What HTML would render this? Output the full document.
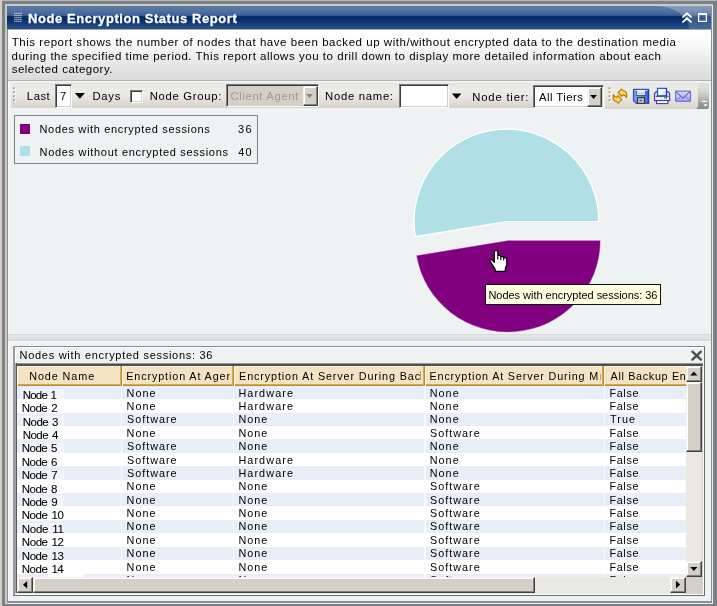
<!DOCTYPE html>
<html><head><meta charset="utf-8"><title>Node Encryption Status Report</title>
<style>
html,body{margin:0;padding:0}
body{width:717px;height:606px;position:relative;overflow:hidden;background:#7d8087;font-family:'Liberation Sans',sans-serif;}
div,span,svg{position:absolute;box-sizing:border-box}
.t{white-space:pre;color:#000}
.sunk{border:1px solid;border-color:#7b7b7b #fdfdfd #fdfdfd #7b7b7b;box-shadow:inset 1px 1px 0 #3c3c3c, inset -1px -1px 0 #d4d0c8;background:#fff}
.btn{background:#d4d0c8;border:1px solid;border-color:#f4f2ee #404040 #404040 #f4f2ee;box-shadow:inset -1px -1px 0 #808080, inset 1px 1px 0 #fff}
.hd{top:0;height:19.8px;background:linear-gradient(to right,#fdf6e6 0,#fdf6e6 1.2px,transparent 1.2px,transparent calc(100% - 1.7px),#d8b05c calc(100% - 1.8px),#ad7e24 100%),linear-gradient(to bottom,#fbf1dc 0,#fbf1dc 1px,#f3e3c3 1px,#f3e3c3 calc(100% - 1.9px),#dcb25a calc(100% - 2px),#ad7e24 100%)}
.vl{top:19.8px;width:1.2px;height:200px;background:rgba(255,255,255,.75)}
</style></head><body>
<!-- outer frame -->
<div style="left:0;top:0;width:2px;height:606px;background:#d4d0c8"></div>
<div style="left:2px;top:0;width:715px;height:1.2px;background:#b4b6ba"></div>
<div style="left:5.2px;top:4px;width:708px;height:600.2px;background:#f0efec"></div>
<div style="left:5.2px;top:4px;width:708px;height:2px;background:#cbcac6"></div>
<div style="left:5.2px;top:4px;width:1.5px;height:600.2px;background:#cbc8c2"></div>
<div style="left:6.7px;top:6px;width:705.3px;height:597px;background:#8a8e95"></div>
<!-- title bar -->
<div style="left:7.2px;top:6px;width:704.1px;height:23.1px;background:linear-gradient(#5c7ca6 0%,#52729f 20%,#43639a 36%,#3b5b92 41%,#0a2f6a 45%,#032a66 51%,#0c3470 67%,#1c437d 83%,#2b5189 100%)"></div>
<svg style="left:0;top:0" width="717" height="40"><defs><linearGradient id="hl" x1="0" y1="0" x2="0" y2="1"><stop offset="0" stop-color="#fff" stop-opacity=".27"/><stop offset=".41" stop-color="#fff" stop-opacity=".18"/><stop offset=".45" stop-color="#fff" stop-opacity=".24"/><stop offset="1" stop-color="#fff" stop-opacity=".13"/></linearGradient></defs>
<path d="M655.5,6 A33.6,23.2 0 0 1 689.1,29.2 L711.3,29.2 L711.3,6 Z" fill="url(#hl)"/>
<g fill="#c8d4e4"><rect x="14.2" y="12.8" width="1.35" height="1.15"/><rect x="16.2" y="12.8" width="1.35" height="1.15"/><rect x="18.2" y="12.8" width="1.35" height="1.15"/><rect x="20.2" y="12.8" width="1.35" height="1.15"/><rect x="14.2" y="14.8" width="1.35" height="1.15"/><rect x="16.2" y="14.8" width="1.35" height="1.15"/><rect x="18.2" y="14.8" width="1.35" height="1.15"/><rect x="20.2" y="14.8" width="1.35" height="1.15"/><rect x="14.2" y="16.8" width="1.35" height="1.15"/><rect x="16.2" y="16.8" width="1.35" height="1.15"/><rect x="18.2" y="16.8" width="1.35" height="1.15"/><rect x="20.2" y="16.8" width="1.35" height="1.15"/><rect x="14.2" y="18.8" width="1.35" height="1.15"/><rect x="16.2" y="18.8" width="1.35" height="1.15"/><rect x="18.2" y="18.8" width="1.35" height="1.15"/><rect x="20.2" y="18.8" width="1.35" height="1.15"/><rect x="14.2" y="20.8" width="1.35" height="1.15"/><rect x="16.2" y="20.8" width="1.35" height="1.15"/><rect x="18.2" y="20.8" width="1.35" height="1.15"/><rect x="20.2" y="20.8" width="1.35" height="1.15"/></g>
<g fill="none" stroke="#fff" stroke-width="1.9" stroke-linecap="round" stroke-linejoin="miter"><path d="M683,16.9 L687,13.3 L691,16.9"/><path d="M683,21.9 L687,18.3 L691,21.9"/></g>
<path d="M698,13 H707 V22 H698 Z M699.2,15 V20.8 H705.8 V15 Z" fill="#fff" fill-rule="evenodd"/>
</svg>
<!-- panel body -->
<div style="left:8px;top:29.1px;width:702.5px;height:572.4px;background:#eef2f3"></div>
<div style="left:8px;top:29.1px;width:702.5px;height:1.2px;background:#a4a8b0"></div>
<div style="left:8px;top:30.3px;width:702.5px;height:49.3px;background:linear-gradient(#ffffff 0%,#fbfbfb 25%,#ebebeb 60%,#dadada 100%)"></div>
<div style="left:8px;top:79.5px;width:702.5px;height:1.1px;background:#b4b4b4"></div>
<div style="left:8px;top:80.6px;width:1.2px;height:520.9px;background:#f7f9fa"></div>
<!-- toolbar 1 -->
<div style="left:10.8px;top:83.4px;width:593.2px;height:25px;border-radius:2.5px;background:linear-gradient(#e8e5e0 0%,#edebe7 22%,#ebe8e4 50%,#e2dfd9 72%,#d5d1c9 100%)"></div>
<!-- toolbar 2 -->
<div style="left:605px;top:83.4px;width:104px;height:25.2px;border-radius:2.5px;overflow:hidden;background:linear-gradient(#e3e1dc 0%,#dad8d3 30%,#bcbbb8 58%,#9c9c9b 80%,#878787 100%)"><div style="left:0;top:0;width:93.2px;height:25.2px;border-bottom-right-radius:3.5px;background:linear-gradient(#e9e7e2 0%,#edebe7 22%,#ebe9e5 50%,#e3e0da 72%,#d8d4cc 100%)"></div></div>
<svg style="left:0;top:80px" width="717" height="32">
<g fill="#fff"><rect x="13.9" y="8.1" width="1.9" height="1.9"/><rect x="13.9" y="12.1" width="1.9" height="1.9"/><rect x="13.9" y="16.2" width="1.9" height="1.9"/><rect x="13.9" y="20.2" width="1.9" height="1.9"/><rect x="609.5" y="8.1" width="1.9" height="1.9"/><rect x="609.5" y="12.1" width="1.9" height="1.9"/><rect x="609.5" y="16.1" width="1.9" height="1.9"/><rect x="609.5" y="20.1" width="1.9" height="1.9"/></g>
<g fill="#a29e96"><rect x="13" y="7.3" width="1.8" height="1.8"/><rect x="13" y="11.3" width="1.8" height="1.8"/><rect x="13" y="15.4" width="1.8" height="1.8"/><rect x="13" y="19.4" width="1.8" height="1.8"/><rect x="608.6" y="7.3" width="1.8" height="1.8"/><rect x="608.6" y="11.3" width="1.8" height="1.8"/><rect x="608.6" y="15.3" width="1.8" height="1.8"/><rect x="608.6" y="19.3" width="1.8" height="1.8"/></g>
</svg>
<div class="sunk" style="left:55px;top:83.9px;width:17px;height:24px"></div>
<svg style="left:70px;top:88px" width="20" height="16" viewBox="70 88 20 16"><path d="M74.8,93.1 H84.9 L79.85,98.7 Z" fill="#000"/></svg>
<div class="sunk" style="left:129.8px;top:89.5px;width:13.4px;height:13.7px"></div>
<div class="sunk" style="left:226.4px;top:84.2px;width:93.1px;height:23.3px;background:#d4d0c8"></div>
<div class="btn" style="left:302.8px;top:86.4px;width:15.1px;height:19.5px"></div>
<svg style="left:300px;top:88px" width="20" height="16" viewBox="300 88 20 16"><path d="M306.2,93.9 H312.9 L309.55,97.9 Z" fill="#85837d"/></svg>
<div class="sunk" style="left:398.9px;top:83.9px;width:49.7px;height:23.8px"></div>
<svg style="left:448px;top:88px" width="20" height="16" viewBox="448 88 20 16"><path d="M451.9,93.6 H461.4 L456.65,99 Z" fill="#000"/></svg>
<div class="sunk" style="left:533.2px;top:85px;width:70.4px;height:23.4px"></div>
<div class="btn" style="left:586.8px;top:87px;width:15.1px;height:19.8px"></div>
<svg style="left:584px;top:88px" width="20" height="16" viewBox="584 88 20 16"><path d="M590.2,95 H596.9 L593.55,99 Z" fill="#000"/></svg>
<!-- toolbar 2 icons -->
<svg style="left:600px;top:80px" width="117" height="32" viewBox="600 80 117 32">
<!-- refresh -->
<defs><linearGradient id="gy" x1="0" y1="0" x2="0" y2="1"><stop offset="0" stop-color="#fff0a0"/><stop offset=".45" stop-color="#fcd850"/><stop offset="1" stop-color="#eeb028"/></linearGradient>
<linearGradient id="gb" x1="0" y1="0" x2="1" y2="0"><stop offset="0" stop-color="#7fa4ea"/><stop offset=".5" stop-color="#5c88de"/><stop offset="1" stop-color="#3a66cc"/></linearGradient>
<linearGradient id="gp" x1="0" y1="0" x2="1" y2="1"><stop offset="0" stop-color="#ffffff"/><stop offset=".5" stop-color="#f4f8ff"/><stop offset="1" stop-color="#b8d8f8"/></linearGradient>
<linearGradient id="gl" x1="0" y1="0" x2="0" y2="1"><stop offset="0" stop-color="#f4f4f4"/><stop offset="1" stop-color="#c4c4c4"/></linearGradient>
<linearGradient id="gm" x1="0" y1="0" x2="0" y2="1"><stop offset="0" stop-color="#d8d8ff"/><stop offset="1" stop-color="#a8a8f8"/></linearGradient>
</defs>
<g stroke="#b27e10" stroke-width="1.15" fill="url(#gy)" stroke-linejoin="round">
<path d="M618.1,92.5 L621.9,89 L623.1,90.7 L625,91.1 L626.7,93.3 L626.6,97.5 L624.6,95.4 L623.1,95 L621.9,96.5 Z"/>
<path transform="rotate(180 619.95 96.1)" d="M618.1,92.5 L621.9,89 L623.1,90.7 L625,91.1 L626.7,93.3 L626.6,97.5 L624.6,95.4 L623.1,95 L621.9,96.5 Z"/>
</g>
<!-- save -->
<path d="M633.5,89.3 H648.6 V103.4 H636.4 L633.5,100.8 Z" fill="url(#gb)" stroke="#2854c2" stroke-width="1.2" stroke-linejoin="round"/>
<path d="M648.5,89.6 V103.4" stroke="#1c44ae" stroke-width="1.3"/>
<path d="M634.4,90.5 H647.6" stroke="#a9c2f2" stroke-width="1"/>
<path d="M636.7,91.2 V95.4 H645.5 V91.2" fill="none" stroke="#2c58c4" stroke-width="1.1"/>
<rect x="637.3" y="90.3" width="7.5" height="4.4" fill="url(#gl)" stroke="#fafafa" stroke-width=".6"/>
<rect x="637.5" y="97.6" width="7" height="5.8" fill="#b2b4b6" stroke="#363638" stroke-width="1"/>
<rect x="639.9" y="99.9" width="2" height="1.2" fill="#3466d4"/>
<!-- print -->
<path d="M656.2,91.6 L654.5,93.6 V100.6 H669.7 V93.6 L668,91.6 Z" fill="#ececf8" stroke="#3e3e8e" stroke-width="1.15" stroke-linejoin="round"/>
<rect x="657.5" y="88.4" width="9" height="7.4" fill="url(#gp)" stroke="#1e5cd0" stroke-width="1.25"/>
<path d="M666.5,88.4 V95.8" stroke="#2c3c9e" stroke-width="1.2"/>
<path d="M655.6,96.3 H668.6" stroke="#3e3e8e" stroke-width="1"/>
<rect x="656.5" y="100.5" width="11.3" height="3.1" fill="#f2f2fc" stroke="#3e3e8e" stroke-width="1.05"/>
<rect x="660" y="101.2" width="4" height="1" fill="#d4e8fc"/>
<rect x="664" y="97" width="1.6" height="1.7" fill="#44c424"/><rect x="665.6" y="97" width="1.5" height="1.7" fill="#2462d2"/>
<!-- mail -->
<rect x="675.6" y="91.1" width="15" height="10.2" rx=".6" fill="url(#gm)" stroke="#5a5acc" stroke-width=".95"/>
<path d="M675.8,101 L680.6,96.4 M690.4,101 L685.6,96.4" fill="none" stroke="#4a74e0" stroke-width="0.8"/>
<path d="M675.8,91.3 L683,98.3 L690.2,91.3" fill="none" stroke="#34347a" stroke-width="0.95"/>
<!-- overflow -->
<path d="M701.8,100.8 H707.1 V102 H701.8 Z" fill="#fff"/>
<path d="M703.6,104.6 L707.6,103.8 L705.4,106.8 Z" fill="#fff"/>
</svg>
<!-- legend -->
<div style="left:13.6px;top:115px;width:244.2px;height:48.8px;border:1px solid #7f8387"></div>
<div style="left:19.8px;top:123.8px;width:10.2px;height:9.9px;background:#800080"></div>
<div style="left:19.8px;top:146.4px;width:10.2px;height:9.9px;background:#b0e0e6"></div>
<!-- pie -->
<svg style="left:0;top:110px" width="717" height="230" viewBox="0 110 717 230"><path d="M506.50,221.50 L415.36,236.71 A92.4,92.4 0 1 1 598.90,221.50 Z" fill="#b0e0e6" stroke="#ffffff" stroke-width="1.2"/><path d="M507.8,240.8 L600.10,240.8 A92.3,91.1 0 0 1 416.76,255.79 Z" fill="#800080" stroke="#943094" stroke-width="0.5"/></svg>
<!-- tooltip -->
<div style="left:485px;top:284.2px;width:175.9px;height:20.8px;background:#ffffe1;border:1.15px solid #101010"></div>
<!-- cursor -->
<svg style="left:486px;top:246px" width="26" height="30" viewBox="486 246 26 30">
<path d="M494.3,251.6 Q494.3,250.6 495.3,250.6 L496.8,250.6 Q497.8,250.6 497.8,251.6 L497.8,255.4 L499.8,255.4 Q500.7,255.4 500.7,256.5 L502.8,256.5 Q503.6,256.5 503.6,257.6 L505.8,257.8 Q506.8,258 506.8,259.2 L506.8,265.4 L505.6,267.6 L505.1,271.3 L495.3,271.3 L495.1,269 L492.6,265.2 L490.1,261.4 L490.1,259.8 Q490.6,259 491.7,259.6 L494.3,262.4 Z" fill="#fff" stroke="#000" stroke-width="1.25" stroke-linejoin="round"/>
<path d="M497.8,255.4 V259.6 M500.8,256.6 V259.9 M503.7,257.7 V260.6" stroke="#000" stroke-width="1.1" fill="none"/>
</svg>
<!-- splitter -->
<div style="left:8px;top:333.8px;width:702.5px;height:6.8px;background:linear-gradient(#d4d7da 0%,#e4e6e8 25%,#dddfe1 70%,#d0d2d5 100%)"></div>
<div style="left:8px;top:340.6px;width:702.5px;height:1px;background:#f6f8fa"></div>
<!-- lower panel -->
<div style="left:13.4px;top:346px;width:691.7px;height:249.9px;background:#6e6c70"></div><div style="left:13.4px;top:346px;width:690.6px;height:1.2px;background:#868a8e"></div><div style="left:13.4px;top:346px;width:1.2px;height:248.8px;background:#989ca0"></div><div style="left:14.6px;top:347.2px;width:689.4px;height:247.6px;background:#eef2f3;box-shadow:inset 1px 1px 0 #fafcfd"></div>
<svg style="left:688px;top:348px" width="16" height="16" viewBox="688 348 16 16"><path d="M692.4,351.6 L700.9,359.6 M700.9,351.6 L692.4,359.6" stroke="#4c4c4c" stroke-width="2.3" stroke-linecap="round" fill="none"/><rect x="695.2" y="354.2" width="2.9" height="2.9" fill="#4c4c4c"/></svg>
<!-- table -->
<div style="left:14.6px;top:363px;width:689.6px;height:231.9px;background:#fff"></div>
<div style="left:14.6px;top:363px;width:688.3px;height:230.7px;background:#d4d0c8"></div>
<div style="left:14.6px;top:363px;width:688.3px;height:2.8px;background:linear-gradient(#969696 0,#969696 42%,#505050 43%,#505050 100%)"></div>
<div style="left:14.6px;top:363px;width:2.3px;height:230.4px;background:linear-gradient(90deg,#a0a0a0 0,#a0a0a0 45%,#585858 46%,#585858 100%)"></div>
<div style="left:16.9px;top:365.8px;width:684.9px;height:227.8px;background:#fff;overflow:hidden">
  <div style="left:0;top:0;width:669px;height:211.2px;overflow:hidden;background:#fff">
    <div style="position:absolute;left:0;top:20.05px;width:100%;height:13.60px;background:#e8eef8"></div><div style="position:absolute;left:0;top:33.45px;width:100%;height:13.60px;background:#ffffff"></div><div style="position:absolute;left:0;top:46.86px;width:100%;height:13.60px;background:#e8eef8"></div><div style="position:absolute;left:0;top:60.26px;width:100%;height:13.60px;background:#ffffff"></div><div style="position:absolute;left:0;top:73.67px;width:100%;height:13.60px;background:#e8eef8"></div><div style="position:absolute;left:0;top:87.07px;width:100%;height:13.60px;background:#ffffff"></div><div style="position:absolute;left:0;top:100.48px;width:100%;height:13.60px;background:#e8eef8"></div><div style="position:absolute;left:0;top:113.88px;width:100%;height:13.60px;background:#ffffff"></div><div style="position:absolute;left:0;top:127.29px;width:100%;height:13.60px;background:#e8eef8"></div><div style="position:absolute;left:0;top:140.69px;width:100%;height:13.60px;background:#ffffff"></div><div style="position:absolute;left:0;top:154.10px;width:100%;height:13.60px;background:#e8eef8"></div><div style="position:absolute;left:0;top:167.51px;width:100%;height:13.60px;background:#ffffff"></div><div style="position:absolute;left:0;top:180.91px;width:100%;height:13.60px;background:#e8eef8"></div><div style="position:absolute;left:0;top:194.31px;width:100%;height:13.60px;background:#ffffff"></div><div style="position:absolute;left:0;top:207.72px;width:100%;height:13.60px;background:#e8eef8"></div>
    <div style="left:3.8px;top:23.3px;width:43.5px;height:11px;background:rgba(255,255,255,.38)"></div><div style="left:3.8px;top:36.8px;width:43.5px;height:11px;background:rgba(255,255,255,.38)"></div><div style="left:3.8px;top:50.2px;width:43.5px;height:11px;background:rgba(255,255,255,.38)"></div><div style="left:3.8px;top:63.6px;width:43.5px;height:11px;background:rgba(255,255,255,.38)"></div><div style="left:3.8px;top:77.0px;width:43.5px;height:11px;background:rgba(255,255,255,.38)"></div><div style="left:3.8px;top:90.4px;width:43.5px;height:11px;background:rgba(255,255,255,.38)"></div><div style="left:3.8px;top:103.8px;width:43.5px;height:11px;background:rgba(255,255,255,.38)"></div><div style="left:3.8px;top:117.2px;width:43.5px;height:11px;background:rgba(255,255,255,.38)"></div><div style="left:3.8px;top:130.6px;width:43.5px;height:11px;background:rgba(255,255,255,.38)"></div><div style="left:3.8px;top:144.0px;width:43.5px;height:11px;background:rgba(255,255,255,.38)"></div><div style="left:3.8px;top:157.4px;width:43.5px;height:11px;background:rgba(255,255,255,.38)"></div><div style="left:3.8px;top:170.9px;width:43.5px;height:11px;background:rgba(255,255,255,.38)"></div><div style="left:3.8px;top:184.3px;width:43.5px;height:11px;background:rgba(255,255,255,.38)"></div><div style="left:3.8px;top:197.7px;width:43.5px;height:11px;background:rgba(255,255,255,.38)"></div>
    <div class="vl" style="left:104.3px"></div><div class="vl" style="left:216.4px"></div><div class="vl" style="left:407.5px"></div><div class="vl" style="left:586.7px"></div>
    <div class="hd" style="left:0;width:104.7px"></div>
    <div class="hd" style="left:104.7px;width:112.1px"></div>
    <div class="hd" style="left:216.8px;width:191.1px"></div>
    <div class="hd" style="left:407.9px;width:179.2px"></div>
    <div class="hd" style="left:587.1px;width:90px"></div>
    <div style="left:403.4px;top:5.6px;width:1.1px;height:8.8px;background:rgba(60,50,30,.38)"></div>
    <div style="left:582.7px;top:8.2px;width:1.1px;height:6.2px;background:rgba(60,50,30,.38)"></div>
  </div>
  <!-- vertical scrollbar -->
  <div style="left:669px;top:0;width:16px;height:211.2px;background:#eae8e3"></div>
  <div class="btn" style="left:669px;top:0.6px;width:15.9px;height:15.2px"></div>
  <svg style="left:669px;top:0.6px" width="16" height="16"><path d="M4.2,9.6 H11.4 L7.8,5.6 Z" fill="#000"/></svg>
  <div class="btn" style="left:669px;top:15.8px;width:15.9px;height:70px"></div>
  <div class="btn" style="left:669px;top:195.2px;width:15.9px;height:15.6px"></div>
  <svg style="left:669px;top:195.2px" width="16" height="16"><path d="M4.2,6 H11.4 L7.8,10 Z" fill="#000"/></svg>
  <!-- horizontal scrollbar -->
  <div style="left:0;top:211.2px;width:685px;height:16.6px;background:#eae8e3"></div>
  <div class="btn" style="left:0;top:211.4px;width:16.1px;height:15.4px"></div>
  <svg style="left:0;top:211.4px" width="16" height="16"><path d="M10.2,4 V11.6 L6,7.8 Z" fill="#000"/></svg>
  <div class="btn" style="left:16.1px;top:211.4px;width:501.7px;height:15.4px"></div>
  <div class="btn" style="left:653.4px;top:211.4px;width:15.6px;height:15.4px"></div>
  <svg style="left:653.4px;top:211.4px" width="16" height="16"><path d="M6,3.8 V11.4 L10.2,7.6 Z" fill="#000"/></svg>
  <div style="left:669px;top:211.2px;width:16px;height:16.6px;background:#d4d0c8"></div>
</div>
<!-- row text (clipped to table viewport) -->
<div style="left:0;top:0;width:685.9px;height:577px;overflow:hidden;background:transparent;will-change:transform">
<span class="t" style="left:29.21px;top:369.00px;font-size:10.8px;line-height:14px;letter-spacing:0.917px;">Node Name</span>
<span class="t" style="left:126.21px;top:369.00px;font-size:10.8px;line-height:14px;letter-spacing:0.884px;">Encryption At Ager</span>
<span class="t" style="left:239.11px;top:369.00px;font-size:10.8px;line-height:14px;letter-spacing:0.871px;">Encryption At Server During Bac</span>
<span class="t" style="left:429.51px;top:369.00px;font-size:10.8px;line-height:14px;letter-spacing:0.838px;">Encryption At Server During M</span>
<span class="t" style="left:610.58px;top:369.00px;font-size:10.8px;line-height:14px;letter-spacing:0.666px;">All Backup En</span>
<span class="t" style="-webkit-text-stroke:.08px #000;left:22.76px;top:388.00px;font-size:11.5px;line-height:15px;letter-spacing:-0.819px;word-spacing:1.2px;">Node 1</span>
<span class="t" style="left:126.61px;top:386.00px;font-size:10.8px;line-height:14px;letter-spacing:1.050px;">None</span>
<span class="t" style="left:238.41px;top:386.00px;font-size:10.8px;line-height:14px;letter-spacing:1.107px;">Hardware</span>
<span class="t" style="left:429.71px;top:386.00px;font-size:10.8px;line-height:14px;letter-spacing:1.050px;">None</span>
<span class="t" style="left:609.41px;top:386.00px;font-size:10.8px;line-height:14px;letter-spacing:0.664px;">False</span>
<span class="t" style="-webkit-text-stroke:.08px #000;left:21.76px;top:401.00px;font-size:11.5px;line-height:15px;letter-spacing:-0.495px;word-spacing:1.2px;">Node 2</span>
<span class="t" style="left:126.61px;top:399.00px;font-size:10.8px;line-height:14px;letter-spacing:1.050px;">None</span>
<span class="t" style="left:238.41px;top:399.00px;font-size:10.8px;line-height:14px;letter-spacing:1.107px;">Hardware</span>
<span class="t" style="left:429.71px;top:399.00px;font-size:10.8px;line-height:14px;letter-spacing:1.050px;">None</span>
<span class="t" style="left:609.41px;top:399.00px;font-size:10.8px;line-height:14px;letter-spacing:0.664px;">False</span>
<span class="t" style="-webkit-text-stroke:.08px #000;left:22.76px;top:415.00px;font-size:11.5px;line-height:15px;letter-spacing:-0.511px;word-spacing:1.2px;">Node 3</span>
<span class="t" style="left:127.01px;top:412.00px;font-size:10.8px;line-height:14px;letter-spacing:0.993px;">Software</span>
<span class="t" style="left:238.41px;top:412.00px;font-size:10.8px;line-height:14px;letter-spacing:1.050px;">None</span>
<span class="t" style="left:429.71px;top:412.00px;font-size:10.8px;line-height:14px;letter-spacing:1.050px;">None</span>
<span class="t" style="left:610.06px;top:412.00px;font-size:10.8px;line-height:14px;letter-spacing:1.067px;">True</span>
<span class="t" style="-webkit-text-stroke:.08px #000;left:22.76px;top:428.00px;font-size:11.5px;line-height:15px;letter-spacing:-0.543px;word-spacing:1.2px;">Node 4</span>
<span class="t" style="left:126.61px;top:426.00px;font-size:10.8px;line-height:14px;letter-spacing:1.050px;">None</span>
<span class="t" style="left:238.41px;top:426.00px;font-size:10.8px;line-height:14px;letter-spacing:1.050px;">None</span>
<span class="t" style="left:430.11px;top:426.00px;font-size:10.8px;line-height:14px;letter-spacing:0.993px;">Software</span>
<span class="t" style="left:609.41px;top:426.00px;font-size:10.8px;line-height:14px;letter-spacing:0.664px;">False</span>
<span class="t" style="-webkit-text-stroke:.08px #000;left:21.76px;top:441.00px;font-size:11.5px;line-height:15px;letter-spacing:-0.515px;word-spacing:1.2px;">Node 5</span>
<span class="t" style="left:127.01px;top:439.00px;font-size:10.8px;line-height:14px;letter-spacing:0.993px;">Software</span>
<span class="t" style="left:238.41px;top:439.00px;font-size:10.8px;line-height:14px;letter-spacing:1.050px;">None</span>
<span class="t" style="left:429.71px;top:439.00px;font-size:10.8px;line-height:14px;letter-spacing:1.050px;">None</span>
<span class="t" style="left:609.41px;top:439.00px;font-size:10.8px;line-height:14px;letter-spacing:0.664px;">False</span>
<span class="t" style="-webkit-text-stroke:.08px #000;left:21.76px;top:455.00px;font-size:11.5px;line-height:15px;letter-spacing:-0.511px;word-spacing:1.2px;">Node 6</span>
<span class="t" style="left:127.01px;top:453.00px;font-size:10.8px;line-height:14px;letter-spacing:0.993px;">Software</span>
<span class="t" style="left:238.41px;top:453.00px;font-size:10.8px;line-height:14px;letter-spacing:1.107px;">Hardware</span>
<span class="t" style="left:429.71px;top:453.00px;font-size:10.8px;line-height:14px;letter-spacing:1.050px;">None</span>
<span class="t" style="left:609.41px;top:453.00px;font-size:10.8px;line-height:14px;letter-spacing:0.664px;">False</span>
<span class="t" style="-webkit-text-stroke:.08px #000;left:21.76px;top:468.00px;font-size:11.5px;line-height:15px;letter-spacing:-0.495px;word-spacing:1.2px;">Node 7</span>
<span class="t" style="left:127.01px;top:466.00px;font-size:10.8px;line-height:14px;letter-spacing:0.993px;">Software</span>
<span class="t" style="left:238.41px;top:466.00px;font-size:10.8px;line-height:14px;letter-spacing:1.107px;">Hardware</span>
<span class="t" style="left:429.71px;top:466.00px;font-size:10.8px;line-height:14px;letter-spacing:1.050px;">None</span>
<span class="t" style="left:609.41px;top:466.00px;font-size:10.8px;line-height:14px;letter-spacing:0.664px;">False</span>
<span class="t" style="-webkit-text-stroke:.08px #000;left:21.76px;top:482.00px;font-size:11.5px;line-height:15px;letter-spacing:-0.511px;word-spacing:1.2px;">Node 8</span>
<span class="t" style="left:126.61px;top:479.00px;font-size:10.8px;line-height:14px;letter-spacing:1.050px;">None</span>
<span class="t" style="left:238.41px;top:479.00px;font-size:10.8px;line-height:14px;letter-spacing:1.050px;">None</span>
<span class="t" style="left:430.11px;top:479.00px;font-size:10.8px;line-height:14px;letter-spacing:0.993px;">Software</span>
<span class="t" style="left:609.41px;top:479.00px;font-size:10.8px;line-height:14px;letter-spacing:0.664px;">False</span>
<span class="t" style="-webkit-text-stroke:.08px #000;left:21.76px;top:495.00px;font-size:11.5px;line-height:15px;letter-spacing:-0.502px;word-spacing:1.2px;">Node 9</span>
<span class="t" style="left:126.61px;top:493.00px;font-size:10.8px;line-height:14px;letter-spacing:1.050px;">None</span>
<span class="t" style="left:238.41px;top:493.00px;font-size:10.8px;line-height:14px;letter-spacing:1.050px;">None</span>
<span class="t" style="left:430.11px;top:493.00px;font-size:10.8px;line-height:14px;letter-spacing:0.993px;">Software</span>
<span class="t" style="left:609.41px;top:493.00px;font-size:10.8px;line-height:14px;letter-spacing:0.664px;">False</span>
<span class="t" style="-webkit-text-stroke:.08px #000;left:21.76px;top:508.00px;font-size:11.5px;line-height:15px;letter-spacing:-0.434px;word-spacing:1.2px;">Node 10</span>
<span class="t" style="left:126.61px;top:506.00px;font-size:10.8px;line-height:14px;letter-spacing:1.050px;">None</span>
<span class="t" style="left:238.41px;top:506.00px;font-size:10.8px;line-height:14px;letter-spacing:1.050px;">None</span>
<span class="t" style="left:430.11px;top:506.00px;font-size:10.8px;line-height:14px;letter-spacing:0.993px;">Software</span>
<span class="t" style="left:609.41px;top:506.00px;font-size:10.8px;line-height:14px;letter-spacing:0.664px;">False</span>
<span class="t" style="-webkit-text-stroke:.08px #000;left:21.76px;top:522.00px;font-size:11.5px;line-height:15px;letter-spacing:-0.274px;word-spacing:1.2px;">Node 11</span>
<span class="t" style="left:126.61px;top:519.00px;font-size:10.8px;line-height:14px;letter-spacing:1.050px;">None</span>
<span class="t" style="left:238.41px;top:519.00px;font-size:10.8px;line-height:14px;letter-spacing:1.050px;">None</span>
<span class="t" style="left:430.11px;top:519.00px;font-size:10.8px;line-height:14px;letter-spacing:0.993px;">Software</span>
<span class="t" style="left:609.41px;top:519.00px;font-size:10.8px;line-height:14px;letter-spacing:0.664px;">False</span>
<span class="t" style="-webkit-text-stroke:.08px #000;left:21.76px;top:535.00px;font-size:11.5px;line-height:15px;letter-spacing:-0.411px;word-spacing:1.2px;">Node 12</span>
<span class="t" style="left:126.61px;top:533.00px;font-size:10.8px;line-height:14px;letter-spacing:1.050px;">None</span>
<span class="t" style="left:238.41px;top:533.00px;font-size:10.8px;line-height:14px;letter-spacing:1.050px;">None</span>
<span class="t" style="left:430.11px;top:533.00px;font-size:10.8px;line-height:14px;letter-spacing:0.993px;">Software</span>
<span class="t" style="left:609.41px;top:533.00px;font-size:10.8px;line-height:14px;letter-spacing:0.664px;">False</span>
<span class="t" style="-webkit-text-stroke:.08px #000;left:21.76px;top:549.00px;font-size:11.5px;line-height:15px;letter-spacing:-0.424px;word-spacing:1.2px;">Node 13</span>
<span class="t" style="left:126.61px;top:546.00px;font-size:10.8px;line-height:14px;letter-spacing:1.050px;">None</span>
<span class="t" style="left:238.41px;top:546.00px;font-size:10.8px;line-height:14px;letter-spacing:1.050px;">None</span>
<span class="t" style="left:430.11px;top:546.00px;font-size:10.8px;line-height:14px;letter-spacing:0.993px;">Software</span>
<span class="t" style="left:609.41px;top:546.00px;font-size:10.8px;line-height:14px;letter-spacing:0.664px;">False</span>
<span class="t" style="-webkit-text-stroke:.08px #000;left:21.76px;top:562.00px;font-size:11.5px;line-height:15px;letter-spacing:-0.451px;word-spacing:1.2px;">Node 14</span>
<span class="t" style="left:126.61px;top:560.00px;font-size:10.8px;line-height:14px;letter-spacing:1.050px;">None</span>
<span class="t" style="left:238.41px;top:560.00px;font-size:10.8px;line-height:14px;letter-spacing:1.050px;">None</span>
<span class="t" style="left:430.11px;top:560.00px;font-size:10.8px;line-height:14px;letter-spacing:0.993px;">Software</span>
<span class="t" style="left:609.41px;top:560.00px;font-size:10.8px;line-height:14px;letter-spacing:0.664px;">False</span>
<span class="t" style="left:126.61px;top:573.00px;font-size:10.8px;line-height:14px;letter-spacing:1.050px;">None</span>
<span class="t" style="left:238.41px;top:573.00px;font-size:10.8px;line-height:14px;letter-spacing:1.050px;">None</span>
<span class="t" style="left:430.11px;top:573.00px;font-size:10.8px;line-height:14px;letter-spacing:0.993px;">Software</span>
<span class="t" style="left:609.41px;top:573.00px;font-size:10.8px;line-height:14px;letter-spacing:0.664px;">False</span>
<div style="left:48px;top:573px;width:36px;height:5px;background:#fff"></div>
</div>
<!-- other text -->
<div style="left:0;top:0;width:717px;height:606px;will-change:transform">
<span class="t" style="left:27.94px;top:10.00px;font-size:13px;line-height:17px;letter-spacing:0.570px;font-weight:700;-webkit-text-stroke:.3px #fff;color:#fff;">Node Encryption Status Report</span>
<span class="t" style="left:11.75px;top:35.00px;font-size:11.5px;line-height:15px;letter-spacing:0.538px;">This report shows the number of nodes that have been backed up with/without encrypted data to the destination media</span>
<span class="t" style="left:11.52px;top:49.00px;font-size:11.5px;line-height:15px;letter-spacing:0.531px;">during the specified time period. This report allows you to drill down to display more detailed information about each</span>
<span class="t" style="left:11.69px;top:62.00px;font-size:11.5px;line-height:15px;letter-spacing:0.492px;">selected category.</span>
<span class="t" style="left:26.87px;top:89.00px;font-size:11.3px;line-height:15px;letter-spacing:0.515px;">Last</span>
<span class="t" style="left:60.02px;top:89.00px;font-size:11.3px;line-height:15px;letter-spacing:0.000px;">7</span>
<span class="t" style="left:92.47px;top:89.00px;font-size:11.3px;line-height:15px;letter-spacing:0.728px;">Days</span>
<span class="t" style="left:149.77px;top:89.00px;font-size:11.3px;line-height:15px;letter-spacing:0.687px;">Node Group:</span>
<span class="t" style="left:230.44px;top:89.00px;font-size:11.3px;line-height:15px;letter-spacing:0.638px;color:#9c9a94;">Client Agent</span>
<span class="t" style="left:325.07px;top:89.00px;font-size:11.3px;line-height:15px;letter-spacing:0.712px;">Node name:</span>
<span class="t" style="left:472.37px;top:90.00px;font-size:11.3px;line-height:15px;letter-spacing:0.785px;">Node tier:</span>
<span class="t" style="left:538.98px;top:90.00px;font-size:11.3px;line-height:15px;letter-spacing:0.468px;">All Tiers</span>
<span class="t" style="left:39.50px;top:122.00px;font-size:11px;line-height:14px;letter-spacing:0.666px;">Nodes with encrypted sessions</span>
<span class="t" style="left:238.08px;top:122.00px;font-size:11px;line-height:14px;letter-spacing:1.243px;">36</span>
<span class="t" style="left:39.50px;top:145.00px;font-size:11px;line-height:14px;letter-spacing:0.695px;">Nodes without encrypted sessions</span>
<span class="t" style="left:238.26px;top:145.00px;font-size:11px;line-height:14px;letter-spacing:1.012px;">40</span>
<span class="t" style="left:488.40px;top:288.00px;font-size:11px;line-height:14px;letter-spacing:-0.028px;">Nodes with encrypted sessions: 36</span>
<span class="t" style="left:19.50px;top:348.00px;font-size:11px;line-height:14px;letter-spacing:0.719px;">Nodes with encrypted sessions: 36</span>
</div>
</body></html>
